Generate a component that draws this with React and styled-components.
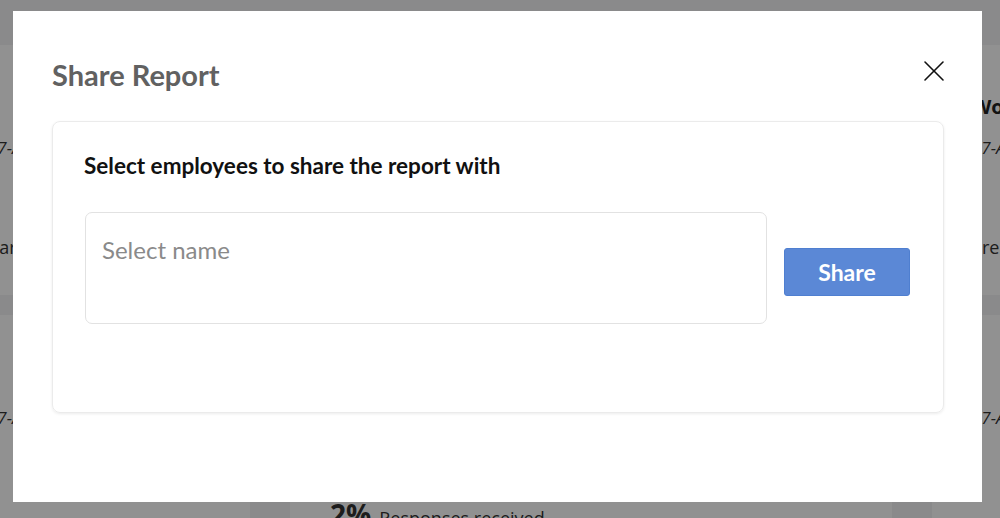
import React from 'react';
import styled, { createGlobalStyle } from 'styled-components';

const GlobalStyle = createGlobalStyle`
  html, body {
    margin: 0;
    padding: 0;
    width: 1000px;
    height: 518px;
    overflow: hidden;
    background: #f2f3f5;
    font-family: Lato, "Open Sans", "Liberation Sans", sans-serif;
  }
`;

const Dashboard = styled.div`
  display: grid;
  grid-template-columns: 302px 602px 400px;
  grid-auto-rows: 250px;
  column-gap: 40px;
  row-gap: 20px;
  margin-left: -52px;
  padding-top: 45px;
`;

const SurveyCard = styled.div`
  background: #ffffff;
  padding: 48px 40px 0 40px;
  display: flex;
  flex-direction: column;
  white-space: nowrap;
  overflow: hidden;
  font-family: "Open Sans", "Liberation Sans", sans-serif;
`;

const SurveyTitle = styled.div`
  font-weight: 700;
  font-size: 20px;
  min-height: 27px;
  color: #222;
`;

const SurveyDate = styled.div`
  margin-top: 16px;
  font-size: 17px;
  font-style: italic;
  color: #333;
`;

const SurveyStat = styled.div`
  margin-top: ${({ $gap }) => $gap || 76}px;
  font-size: 18px;
  color: #333;

  b {
    font-size: 28px;
    margin-right: 8px;
  }
`;

const Overlay = styled.div`
  position: fixed;
  inset: 0;
  background: rgba(0, 0, 0, 0.43);
`;

const Modal = styled.div`
  position: fixed;
  top: 11px;
  left: 13px;
  width: 969px;
  height: 491px;
  background: #ffffff;
  box-sizing: border-box;
  padding: 46px 38px 0 39px;
  display: flex;
  flex-direction: column;
`;

const ModalHeader = styled.div`
  display: flex;
  align-items: flex-start;
  justify-content: space-between;
`;

const ModalTitle = styled.h2`
  margin: 0;
  font-size: 29px;
  line-height: 36px;
  font-weight: 700;
  color: #616161;
`;

const CloseButton = styled.button`
  border: none;
  background: transparent;
  padding: 0;
  margin: 3px -1px 0 0;
  width: 22px;
  height: 22px;
  cursor: pointer;
  display: flex;
`;

const Panel = styled.div`
  margin-top: 28px;
  border: 1px solid #ebebeb;
  border-radius: 8px;
  box-shadow: 0 1px 3px rgba(0, 0, 0, 0.08);
  padding: 30px 33px 88px 31px;
  display: flex;
  flex-direction: column;
`;

const PanelHeading = styled.h3`
  margin: 0;
  font-size: 22.5px;
  line-height: 28px;
  font-weight: 700;
  color: #111;
`;

const FieldRow = styled.div`
  margin-top: 32px;
  display: flex;
  align-items: center;
  gap: 17px;
`;

const NameField = styled.div`
  width: 682px;
  height: 112px;
  box-sizing: border-box;
  border: 1px solid #e2e2e2;
  border-radius: 7px;
  padding: 22px 16px;
  font-size: 24px;
  line-height: 30px;
  color: #8a8a8a;
  margin-left: 1px;
`;

const ShareButton = styled.button`
  width: 126px;
  height: 48px;
  margin-top: 8px;
  border: 1px solid #4f7fd0;
  border-radius: 3px;
  background: #5b88d6;
  color: #ffffff;
  font-family: Lato, "Open Sans", sans-serif;
  font-size: 23px;
  font-weight: 700;
  cursor: pointer;
`;

const cards = [
  { title: '', date: '07-Aug-2023', stat: 'Care' },
  { title: '', date: '', stat: '' },
  { title: 'Workplace Pulse', date: '07-Aug-2023', stat: 'are' },
  { title: '', date: '07-Aug-2023', stat: '' },
  { title: 'Engagement Survey', date: '07-Aug-2023', stat: 'Responses received', pct: '2%', gap: 66 },
  { title: '', date: '07-Aug-2023', stat: '' },
];

export default function App() {
  return (
    <>
      <GlobalStyle />
      <Dashboard>
        {cards.map((c, i) => (
          <SurveyCard key={i}>
            <SurveyTitle>{c.title}</SurveyTitle>
            <SurveyDate>{c.date}</SurveyDate>
            <SurveyStat $gap={c.gap}>
              {c.pct && <b>{c.pct}</b>}
              {c.stat}
            </SurveyStat>
          </SurveyCard>
        ))}
      </Dashboard>
      <Overlay />
      <Modal role="dialog" aria-label="Share Report">
        <ModalHeader>
          <ModalTitle>Share Report</ModalTitle>
          <CloseButton aria-label="Close">
            <svg width="22" height="22" viewBox="0 0 22 22" fill="none" stroke="#111" strokeWidth="1.6" strokeLinecap="round">
              <path d="M2 2 L20 20" />
              <path d="M20 2 L2 20" />
            </svg>
          </CloseButton>
        </ModalHeader>
        <Panel>
          <PanelHeading>Select employees to share the report with</PanelHeading>
          <FieldRow>
            <NameField>Select name</NameField>
            <ShareButton>Share</ShareButton>
          </FieldRow>
        </Panel>
      </Modal>
    </>
  );
}
